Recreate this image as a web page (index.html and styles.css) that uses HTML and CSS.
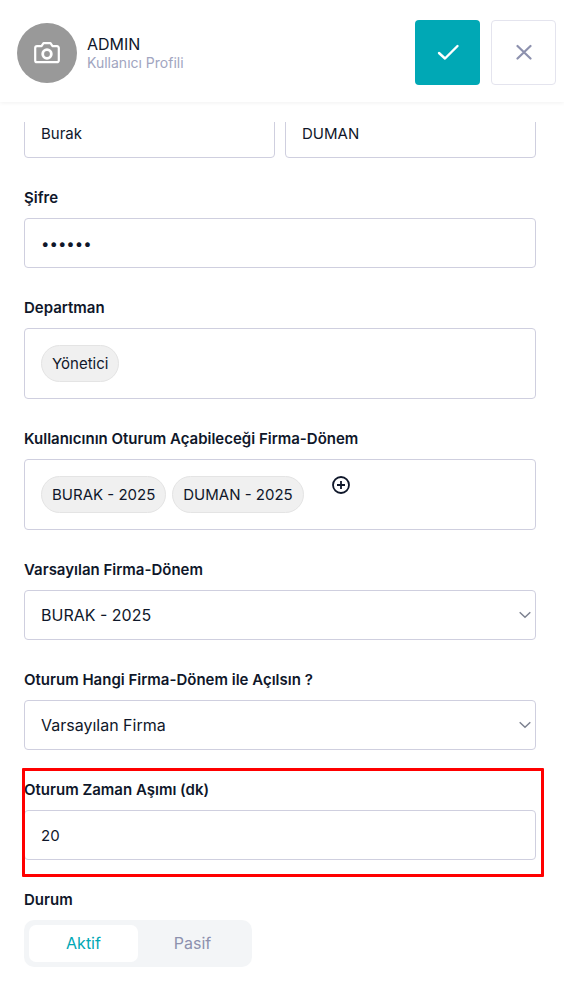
FILE: index.html
```html
<!DOCTYPE html>
<html lang="tr">
<head>
    <meta charset="UTF-8">
    <meta name="viewport" content="width=device-width, initial-scale=1.0">
    <title>Kullanıcı Profili</title>
    <link rel="stylesheet" href="styles.css">
</head>
<body>
    <header class="header">
        <button type="button" class="avatar" aria-label="Fotoğraf">
            <svg width="26" height="22" viewBox="0 0 26 22" fill="none" stroke="currentColor" stroke-width="2.200" stroke-linejoin="round">
                <path d="M3 4.200h4.500l2-3h7l2 3H23a1.800 1.800 0 0 1 1.800 1.800v12.400a1.800 1.800 0 0 1-1.800 1.800H3a1.800 1.800 0 0 1-1.800-1.800V6a1.800 1.800 0 0 1 1.800-1.800z"/>
                <circle cx="13" cy="12" r="4.300" stroke-width="2.800"/>
            </svg>
        </button>
        <div class="user">
            <div class="user-name">ADMIN</div>
            <div class="user-title">Kullanıcı Profili</div>
        </div>
        <div class="actions">
            <button type="submit" form="profileForm" class="btn btn-save" aria-label="Kaydet">
                <svg width="24" height="18" viewBox="0 0 24 18" fill="none" stroke="currentColor" stroke-width="2.400" stroke-linecap="round" stroke-linejoin="round">
                    <path d="M3 9l6 5.500L21.500 2"/>
                </svg>
            </button>
            <button type="button" class="btn btn-close" aria-label="Kapat">
                <svg width="16" height="18" viewBox="0 0 16 18" fill="none" stroke="currentColor" stroke-width="2.200" stroke-linecap="round">
                    <path d="M1.500 2l13 12.500M14.500 2l-13 12.500"/>
                </svg>
            </button>
        </div>
    </header>

    <main class="content">
        <form class="form" id="profileForm">
            <div class="row">
                <input class="input" type="text" value="Burak" aria-label="Ad">
                <input class="input" type="text" value="DUMAN" aria-label="Soyad">
            </div>

            <div class="field">
                <label class="label" for="password">Şifre</label>
                <input class="input" type="password" id="password" value="123456">
            </div>

            <div class="field" role="group" aria-labelledby="departmentLabel">
                <div class="label" id="departmentLabel">Departman</div>
                <div class="chips">
                    <button type="button" class="chip">Yönetici</button>
                </div>
            </div>

            <div class="field" role="group" aria-labelledby="periodsLabel">
                <div class="label" id="periodsLabel">Kullanıcının Oturum Açabileceği Firma-Dönem</div>
                <div class="chips">
                    <button type="button" class="chip">BURAK - 2025</button>
                    <button type="button" class="chip">DUMAN - 2025</button>
                    <button type="button" class="chip-add" aria-label="Ekle">
                        <svg width="18" height="18" viewBox="0 0 18 18" fill="none" stroke="currentColor" stroke-width="1.800">
                            <circle cx="9" cy="9" r="8"/>
                            <path d="M9 5v8M5 9h8"/>
                        </svg>
                    </button>
                </div>
            </div>

            <div class="field">
                <label class="label" for="defaultPeriod">Varsayılan Firma-Dönem</label>
                <div class="select-wrap">
                    <select class="input select" id="defaultPeriod">
                        <option>BURAK - 2025</option>
                        <option>DUMAN - 2025</option>
                    </select>
                    <svg class="arrow" width="12" height="8" viewBox="0 0 12 8" fill="none" stroke="currentColor" stroke-width="1.500">
                        <path d="M0.700 1.200L6 6.300l5.300-5.100"/>
                    </svg>
                </div>
            </div>

            <div class="field">
                <label class="label" for="openWith">Oturum Hangi Firma-Dönem ile Açılsın ?</label>
                <div class="select-wrap">
                    <select class="input select" id="openWith">
                        <option>Varsayılan Firma</option>
                    </select>
                    <svg class="arrow" width="12" height="8" viewBox="0 0 12 8" fill="none" stroke="currentColor" stroke-width="1.500">
                        <path d="M0.700 1.200L6 6.300l5.300-5.100"/>
                    </svg>
                </div>
            </div>

            <div class="field marked">
                <label class="label" for="timeout">Oturum Zaman Aşımı (dk)</label>
                <input class="input" type="text" inputmode="numeric" id="timeout" value="20">
            </div>

            <fieldset class="field status">
                <legend class="label">Durum</legend>
                <div class="toggle">
                    <input type="radio" name="status" id="active" checked>
                    <label for="active">Aktif</label>
                    <input type="radio" name="status" id="passive">
                    <label for="passive">Pasif</label>
                </div>
            </fieldset>
        </form>
    </main>
</body>
</html>
```

FILE: styles.css
```css
* {
    margin: 0;
    padding: 0;
    box-sizing: border-box;
}

body {
    font-family: Inter, "Liberation Sans", sans-serif;
    font-size: 15px;
    color: #0f172a;
    background: #fff;
}

button,
input,
select {
    font: inherit;
    color: inherit;
}

button {
    border: none;
    background: none;
    cursor: pointer;
}

svg {
    display: block;
}

/* header */
.header {
    display: flex;
    align-items: center;
    padding: 20px 8px 17px 17px;
    box-shadow: 0 1px 4px rgba(0, 0, 0, 0.06);
}

.avatar {
    display: flex;
    align-items: center;
    justify-content: center;
    width: 60px;
    height: 60px;
    border-radius: 50%;
    background: #999;
    color: #fff;
}

.user {
    flex: 1;
    margin-left: 10px;
}

.user-name {
    font-size: 16px;
    line-height: 20px;
}

.user-title {
    font-size: 14px;
    line-height: 18px;
    color: #a1a5c0;
}

.actions {
    display: flex;
    gap: 11px;
}

.btn {
    display: flex;
    align-items: center;
    justify-content: center;
    width: 65px;
    height: 65px;
    border-radius: 4px;
}

.btn-save {
    background: #00a8b5;
    color: #fff;
}

.btn-close {
    border: 1px solid #e4e4ee;
    color: #8d91ae;
}

/* scrolled area */
.content {
    margin-top: 20px;
    overflow: hidden;
}

.form {
    display: flex;
    flex-direction: column;
    gap: 30px;
    margin-top: -14px;
    padding: 0 28px 30px 24px;
}

.row {
    display: flex;
    gap: 10px;
}

.field {
    position: relative;
    display: flex;
    flex-direction: column;
    gap: 10px;
}

.label {
    font-size: 15px;
    font-weight: 600;
    line-height: 20px;
}

.input {
    width: 100%;
    min-width: 0;
    height: 50px;
    padding: 0 16px;
    border: 1px solid #cfcfdf;
    border-radius: 4px;
    background: #fff;
    outline: none;
}

.chips {
    display: flex;
    gap: 6px;
    padding: 16px;
    border: 1px solid #cfcfdf;
    border-radius: 4px;
}

.chip {
    height: 37px;
    padding: 0 10px;
    border: 1px solid #e4e4e4;
    border-radius: 20px;
    background: #f0f0f0;
}

.chip-add {
    align-self: flex-start;
    margin-left: 22px;
}

.select-wrap {
    position: relative;
}

.select {
    display: block;
    appearance: none;
    font-size: 16px;
}

.arrow {
    position: absolute;
    top: 21px;
    right: 5px;
    color: #7d8290;
    pointer-events: none;
}

/* red frame over the field */
.marked::after {
    content: "";
    position: absolute;
    inset: -12px -8px -17px -2px;
    border: 3px solid #f00;
    border-radius: 1px;
    pointer-events: none;
}

.status {
    display: block;
    border: none;
}

.toggle {
    display: flex;
    width: 228px;
    margin-top: 10px;
    padding: 5px;
    border-radius: 10px;
    background: #f3f5f7;
}

.toggle input {
    position: absolute;
    opacity: 0;
}

.toggle label {
    flex: 1;
    border-radius: 7px;
    font-size: 16px;
    line-height: 37px;
    text-align: center;
    color: #8d91ae;
    cursor: pointer;
}

.toggle input:checked + label {
    background: #fff;
    color: #00a8b5;
}
```
